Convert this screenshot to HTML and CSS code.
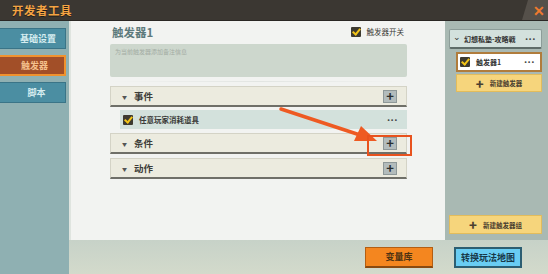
FILE: index.html
```html
<!DOCTYPE html>
<html lang="zh">
<head>
  <meta charset="UTF-8" />
  <meta name="viewport" content="width=device-width, initial-scale=1.0" />
  <title>开发者工具</title>
  <link rel="stylesheet" href="styles.css">
</head>
<body>
  <div class="app">
    <div class="topbar">
      <span class="app-title">开发者工具</span>
      <div class="close-area"><span class="close">✕</span></div>
    </div>

    <div class="body">
      <div class="sidebar">
        <div class="nav-btn">基础设置</div>
        <div class="nav-btn active">触发器</div>
        <div class="nav-btn center">脚本</div>
      </div>

      <div class="main">
        <div class="work">
          <div class="editor">
            <div class="editor-head">
              <span class="trigger-name">触发器1</span>
              <label class="switch"><span class="check"></span>触发器开关</label>
            </div>
            <div class="note">为当前触发器添加备注信息</div>
            <div class="rule"></div>

            <div class="section">
              <span class="tri">▼</span><span class="sec-title">事件</span>
              <span class="plus-btn">+</span>
            </div>
            <div class="child">
              <span class="check small"></span><span class="child-title">任意玩家消耗道具</span>
              <span class="dots">•••</span>
            </div>
            <div class="section">
              <span class="tri">▼</span><span class="sec-title">条件</span>
              <span class="plus-btn">+</span>
            </div>
            <div class="section">
              <span class="tri">▼</span><span class="sec-title">动作</span>
              <span class="plus-btn">+</span>
            </div>
          </div>

          <div class="tree">
            <div class="group">
              <span class="chev">⌄</span><span class="group-name">幻想私塾-攻略戦</span>
              <span class="dots">•••</span>
            </div>
            <div class="item">
              <span class="check small"></span><span class="item-name">触发器1</span>
              <span class="dots">•••</span>
            </div>
            <div class="yellow-btn"><b>+</b>新建触发器</div>
            <div class="spacer"></div>
            <div class="yellow-btn wide"><b>+</b>新建触发器组</div>
          </div>
        </div>

        <div class="bottombar">
          <div class="btn orange">变量库</div>
          <div class="btn blue">转换玩法地图</div>
        </div>
      </div>
    </div>

    <!-- annotation overlay -->
    <svg class="arrow" width="548" height="274" viewBox="0 0 548 274">
      <line x1="281" y1="109" x2="360" y2="135" stroke="#ee5a22" stroke-width="3.5" stroke-linecap="round" />
      <polygon points="377,141 354,141 361,126" fill="#ee5a22" />
    </svg>
    <div class="highlight"></div>
  </div>
</body>
</html>
```

FILE: styles.css
```css
body {
  margin: 0;
  font-family: "Noto Sans CJK SC", "Noto Sans", sans-serif;
  background-color: #8fb0b2;
}
.app {
  position: relative;
  width: 548px;
  height: 274px;
  overflow: hidden;
  display: flex;
  flex-direction: column;
}
.topbar {
  height: 21px;
  background-color: #3b3732;
  display: flex;
  align-items: center;
  justify-content: space-between;
  border-bottom: 1px solid #2a2724;
  box-sizing: border-box;
}
.app-title {
  margin-left: 12px;
  color: #f4a443;
  font-size: 11.5px;
  font-weight: bold;
  letter-spacing: 0.5px;
  text-shadow: 0 1px 0 #1e1a16;
}
.close-area {
  height: 100%;
  width: 26px;
  background-color: #55504a;
  clip-path: polygon(6px 0, 100% 0, 100% 100%, 0 100%);
  display: flex;
  align-items: center;
  justify-content: flex-end;
}
.close {
  color: #f07a2e;
  font-size: 14px;
  font-weight: bold;
  line-height: 1;
  margin-right: 3px;
}
.body {
  flex: 1;
  display: flex;
}
.sidebar {
  width: 69px;
  background-color: #8fb0b2;
  padding-top: 7px;
  display: flex;
  flex-direction: column;
  gap: 6px;
  box-sizing: border-box;
}
.nav-btn {
  width: 66px;
  height: 21px;
  box-sizing: border-box;
  background-color: #4b8ea2;
  border: 1px solid #3a7487;
  border-left: none;
  color: #d6edf0;
  font-size: 9px;
  font-weight: bold;
  display: flex;
  align-items: center;
  justify-content: flex-end;
  padding-right: 9px;
}
.nav-btn.active {
  background-color: #a24f28;
  border: 2px solid #f0922e;
  border-left: none;
  color: #f4c08c;
  padding-right: 16px;
}
.nav-btn.center {
  justify-content: center;
  padding-right: 0;
  padding-left: 8px;
}
.main {
  flex: 1;
  display: flex;
  flex-direction: column;
}
.work {
  height: 219px;
  display: flex;
}
.editor {
  width: 376px;
  background-color: #f2f3f1;
  border-left: 2px solid #dfe4df;
  box-sizing: border-box;
  padding: 1px 38px 0 39px;
}
.editor-head {
  height: 19px;
  display: flex;
  align-items: center;
  justify-content: space-between;
}
.trigger-name {
  color: #5d7a7c;
  font-size: 11.5px;
  font-weight: bold;
  margin-left: 2px;
}
.switch {
  display: flex;
  align-items: center;
  gap: 6px;
  font-size: 7.5px;
  color: #3a3a36;
  margin-right: 3px;
}
.check {
  width: 10px;
  height: 10px;
  background-color: #3d3a30;
  border-radius: 1px;
  position: relative;
  flex: none;
}
.check::after {
  content: "";
  position: absolute;
  left: 3px;
  top: 0px;
  width: 3px;
  height: 6px;
  border: solid #f2c418;
  border-width: 0 2px 2px 0;
  transform: rotate(40deg);
}
.note {
  margin-top: 3px;
  height: 33px;
  background-color: #cdd7cd;
  border-radius: 2px;
  color: #a3aca3;
  font-size: 6px;
  padding: 3px 5px;
  box-sizing: border-box;
}
.rule {
  height: 1px;
  margin: 4px 0 4px;
  background: linear-gradient(to right, #f2f3f1, #e2e5e2 50%, #f2f3f1);
}
.section {
  height: 21px;
  background-color: #ecebdf;
  border: 1px solid #d4d3c6;
  border-bottom: 2px solid #6f6f68;
  box-sizing: border-box;
  display: flex;
  align-items: center;
  margin-bottom: 4px;
}
.tri {
  font-size: 5px;
  color: #555;
  margin: 0 7px 0 11px;
}
.sec-title {
  font-size: 9.5px;
  font-weight: bold;
  color: #3c3c38;
  flex: 1;
}
.plus-btn {
  width: 12px;
  height: 11px;
  background-color: #b3bcbc;
  border: 1px solid #8e9898;
  color: #2b2f2f;
  font-size: 13px;
  font-weight: bold;
  line-height: 10px;
  text-align: center;
  margin-right: 9px;
}
.child {
  height: 19px;
  margin: -1px 0 4px 10px;
  background-color: #d3e1dc;
  display: flex;
  align-items: center;
  padding-left: 3px;
}
.child-title {
  font-size: 7.5px;
  font-weight: bold;
  color: #3b3b38;
  margin-left: 6px;
  flex: 1;
}
.dots {
  font-family: "DejaVu Sans", sans-serif;
  font-size: 5px;
  font-weight: bold;
  color: #444;
  margin-right: 9px;
  letter-spacing: 0.5px;
}
.tree {
  flex: 1;
  background-color: #a9b9b3;
  display: flex;
  flex-direction: column;
  padding: 8px 6px 6px 4px;
  box-sizing: border-box;
}
.group {
  height: 20px;
  background-color: #d3e1dd;
  border: 1px solid #8d9d99;
  border-bottom: 2px solid #5e6c68;
  box-sizing: border-box;
  display: flex;
  align-items: center;
  border-radius: 2px;
  white-space: nowrap;
}
.chev {
  font-size: 9px;
  color: #333;
  margin: -5px 3px 0 3px;
}
.group-name {
  font-size: 7px;
  font-weight: bold;
  color: #333;
  flex: 1;
}
.group .dots {
  margin-right: 5px;
}
.item {
  height: 20px;
  margin: 3px 0 2px 7px;
  background-color: #ffffff;
  border: 2px solid #b07c3c;
  box-sizing: border-box;
  display: flex;
  align-items: center;
  padding-left: 2px;
}
.item-name {
  font-size: 7px;
  font-weight: bold;
  color: #333;
  margin-left: 6px;
  flex: 1;
}
.item .dots {
  margin-right: 5px;
}
.yellow-btn {
  height: 18px;
  margin-left: 7px;
  background-color: #f6d57c;
  border: 1px solid #e2bc5c;
  box-sizing: border-box;
  display: flex;
  align-items: center;
  justify-content: center;
  font-size: 6.5px;
  font-weight: bold;
  color: #4a4030;
}
.yellow-btn b {
  font-size: 13px;
  margin-right: 6px;
  line-height: 1;
}
.yellow-btn.wide {
  margin-left: 0;
  height: 19px;
}
.spacer {
  flex: 1;
}
.bottombar {
  flex: 1;
  background: linear-gradient(to bottom, #c7d2c8, #d3dacb);
  display: flex;
  align-items: center;
  padding-left: 296px;
  gap: 21px;
}
.btn {
  width: 68px;
  height: 21px;
  box-sizing: border-box;
  display: flex;
  align-items: center;
  justify-content: center;
  font-size: 9px;
  font-weight: bold;
}
.btn.orange {
  background-color: #f4861f;
  border: 1px solid #b35e12;
  border-bottom: 2px solid #8a4a10;
  color: #4e3212;
}
.btn.blue {
  background-color: #69cdf3;
  border: 2px solid #2c5e72;
  color: #173848;
}
.arrow {
  position: absolute;
  left: 0;
  top: 0;
  pointer-events: none;
}
.highlight {
  position: absolute;
  left: 367px;
  top: 135px;
  width: 45px;
  height: 21px;
  border: 2px solid #e8521e;
  box-sizing: border-box;
}
```
